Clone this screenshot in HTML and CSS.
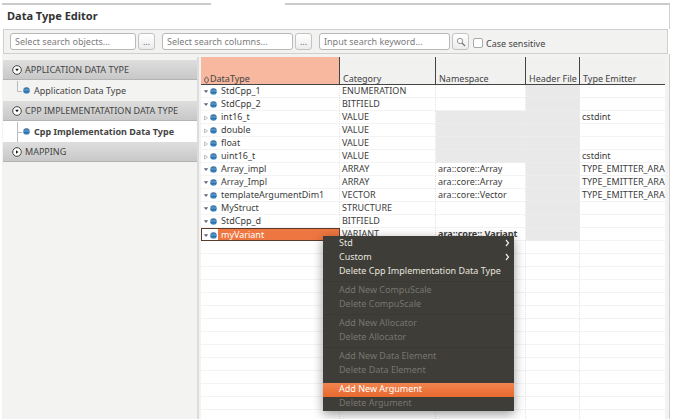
FILE: index.html
```html
<!DOCTYPE html>
<html lang="en">
<head>
<meta charset="utf-8">
<title>Data Type Editor</title>
<link rel="stylesheet" href="styles.css">
</head>
<body>
<svg class="defs" aria-hidden="true">
  <defs>
    <linearGradient id="ball" x1="0" y1="0" x2="0" y2="1">
      <stop offset="0" stop-color="#34628f"/><stop offset=".3" stop-color="#4b88ba"/><stop offset=".45" stop-color="#5f9fce"/><stop offset=".6" stop-color="#2a6ba5"/><stop offset="1" stop-color="#4a96cc"/>
    </linearGradient>
    <symbol id="dot" viewBox="0 0 7 7"><circle cx="3.5" cy="3.5" r="3.3" fill="url(#ball)"/></symbol>
    <symbol id="open" viewBox="0 0 6 6"><path d="M.8 1.2h4.4L3 4z" fill="#5d6a80"/></symbol>
    <symbol id="shut" viewBox="0 0 6 6"><path d="M1.5 1v4L4.5 3z" fill="#fff" stroke="#a8a8a8" stroke-width=".7"/></symbol>
    <symbol id="ring-down" viewBox="0 0 10 10"><circle cx="5" cy="5" r="4.3" fill="#fff" stroke="#444"/><path d="M3.2 3.8h3.6L5 6.2z" fill="#111"/></symbol>
    <symbol id="ring-right" viewBox="0 0 10 10"><circle cx="5" cy="5" r="4.3" fill="#fff" stroke="#444"/><path d="M4 3.2v3.6L6.4 5z" fill="#111"/></symbol>
  </defs>
</svg>
<div class="editor">
  <div class="tabline"><span></span><span></span></div>
  <h1>Data Type Editor</h1>
  <form class="toolbar">
    <input class="field" type="text" aria-label="Search objects" placeholder="Select search objects...">
    <button class="more" type="button">...</button>
    <input class="field wide" type="text" aria-label="Search columns" placeholder="Select search columns...">
    <button class="more" type="button">...</button>
    <input class="field wide" type="text" aria-label="Search keyword" placeholder="Input search keyword...">
    <button class="more find" type="button" aria-label="Search"><svg viewBox="0 0 10 10"><circle cx="4" cy="4" r="2.7" fill="#fafafa" stroke="#999"/><path d="M6 6l3 3" stroke="#777" stroke-width="1.3"/></svg></button>
    <span class="option"><input class="check" type="checkbox" id="case"><label for="case">Case sensitive</label></span>
  </form>
  <div class="main">
    <nav class="side">
      <button class="group" type="button"><svg><use href="#ring-down"/></svg>APPLICATION DATA TYPE</button>
      <a class="leaf" href="#app"><svg class="branch" viewBox="0 0 8 20"><path d="M2.5 0v10.5H7" fill="none" stroke="#bbb"/></svg><svg class="dot"><use href="#dot"/></svg>Application Data Type</a>
      <button class="group" type="button"><svg><use href="#ring-down"/></svg>CPP IMPLEMENTATATION DATA TYPE</button>
      <a class="leaf current" href="#cpp"><svg class="branch" viewBox="0 0 8 20"><path d="M2.5 0v20M2.5 10.5H7" fill="none" stroke="#bbb"/></svg><svg class="dot"><use href="#dot"/></svg>Cpp Implementation Data Type</a>
      <button class="group" type="button"><svg><use href="#ring-right"/></svg>MAPPING</button>
    </nav>
    <div class="content">
      <table>
        <colgroup><col class="c-type"><col class="c-cat"><col class="c-ns"><col class="c-head"><col></colgroup>
        <thead><tr><th class="sorted"><svg class="sort" viewBox="0 0 5 8"><path d="M2.5.8L4.3 3v2L2.5 7.2.7 5V3z" fill="none" stroke="#444" stroke-width=".8"/></svg>DataType</th><th>Category</th><th>Namespace</th><th>Header File</th><th>Type Emitter</th></tr></thead>
        <tbody>
          <tr><td><svg class="tw"><use href="#open"/></svg><svg class="dot"><use href="#dot"/></svg><span>StdCpp_1</span></td><td>ENUMERATION</td><td></td><td class="off"></td><td></td></tr>
          <tr><td><svg class="tw"><use href="#open"/></svg><svg class="dot"><use href="#dot"/></svg><span>StdCpp_2</span></td><td>BITFIELD</td><td></td><td class="off"></td><td></td></tr>
          <tr><td><svg class="tw"><use href="#shut"/></svg><svg class="dot"><use href="#dot"/></svg><span>int16_t</span></td><td>VALUE</td><td class="off"></td><td class="off"></td><td>cstdint</td></tr>
          <tr><td><svg class="tw"><use href="#shut"/></svg><svg class="dot"><use href="#dot"/></svg><span>double</span></td><td>VALUE</td><td class="off"></td><td class="off"></td><td></td></tr>
          <tr><td><svg class="tw"><use href="#shut"/></svg><svg class="dot"><use href="#dot"/></svg><span>float</span></td><td>VALUE</td><td class="off"></td><td class="off"></td><td></td></tr>
          <tr><td><svg class="tw"><use href="#shut"/></svg><svg class="dot"><use href="#dot"/></svg><span>uint16_t</span></td><td>VALUE</td><td class="off"></td><td class="off"></td><td>cstdint</td></tr>
          <tr><td><svg class="tw"><use href="#open"/></svg><svg class="dot"><use href="#dot"/></svg><span>Array_impl</span></td><td>ARRAY</td><td>ara::core::Array</td><td class="off"></td><td>TYPE_EMITTER_ARA</td></tr>
          <tr><td><svg class="tw"><use href="#open"/></svg><svg class="dot"><use href="#dot"/></svg><span>Array_Impl</span></td><td>ARRAY</td><td>ara::core::Array</td><td class="off"></td><td>TYPE_EMITTER_ARA</td></tr>
          <tr><td><svg class="tw"><use href="#open"/></svg><svg class="dot"><use href="#dot"/></svg><span>templateArgumentDim1</span></td><td>VECTOR</td><td>ara::core::Vector</td><td class="off"></td><td>TYPE_EMITTER_ARA</td></tr>
          <tr><td><svg class="tw"><use href="#open"/></svg><svg class="dot"><use href="#dot"/></svg><span>MyStruct</span></td><td>STRUCTURE</td><td></td><td class="off"></td><td></td></tr>
          <tr><td><svg class="tw"><use href="#open"/></svg><svg class="dot"><use href="#dot"/></svg><span>StdCpp_d</span></td><td>BITFIELD</td><td></td><td class="off"></td><td></td></tr>
          <tr class="selected"><td><svg class="tw"><use href="#open"/></svg><svg class="dot"><use href="#dot"/></svg><span>myVariant</span></td><td>VARIANT</td><td class="strong">ara::core:: Variant</td><td class="off"></td><td></td></tr>
          <tr><td></td><td></td><td></td><td></td><td></td></tr>
          <tr><td></td><td></td><td></td><td></td><td></td></tr>
          <tr><td></td><td></td><td></td><td></td><td></td></tr>
          <tr><td></td><td></td><td></td><td></td><td></td></tr>
          <tr><td></td><td></td><td></td><td></td><td></td></tr>
          <tr><td></td><td></td><td></td><td></td><td></td></tr>
          <tr><td></td><td></td><td></td><td></td><td></td></tr>
          <tr><td></td><td></td><td></td><td></td><td></td></tr>
          <tr><td></td><td></td><td></td><td></td><td></td></tr>
          <tr><td></td><td></td><td></td><td></td><td></td></tr>
          <tr><td></td><td></td><td></td><td></td><td></td></tr>
          <tr><td></td><td></td><td></td><td></td><td></td></tr>
          <tr><td></td><td></td><td></td><td></td><td></td></tr>
          <tr><td></td><td></td><td></td><td></td><td></td></tr>
        </tbody>
      </table>
      <div class="menu" role="menu">
        <button type="button" role="menuitem">Std<svg viewBox="0 0 5 8"><path d="M1 1l2.5 3L1 7" fill="none" stroke="#eee" stroke-width="1.2"/></svg></button>
        <button type="button" role="menuitem">Custom<svg viewBox="0 0 5 8"><path d="M1 1l2.5 3L1 7" fill="none" stroke="#eee" stroke-width="1.2"/></svg></button>
        <button type="button" role="menuitem">Delete Cpp Implementation Data Type</button>
        <hr>
        <button type="button" role="menuitem" disabled>Add New CompuScale</button>
        <button type="button" role="menuitem" disabled>Delete CompuScale</button>
        <hr>
        <button type="button" role="menuitem" disabled>Add New Allocator</button>
        <button type="button" role="menuitem" disabled>Delete Allocator</button>
        <hr>
        <button type="button" role="menuitem" disabled>Add New Data Element</button>
        <button type="button" role="menuitem" disabled>Delete Data Element</button>
        <hr>
        <button type="button" role="menuitem" class="active">Add New Argument</button>
        <button type="button" role="menuitem" disabled>Delete Argument</button>
      </div>
    </div>
  </div>
</div>
</body>
</html>
```
FILE: styles.css
```css
* { box-sizing: border-box; }
body {
  margin: 0;
  background: #fff;
  color: #444;
  font: 9px/13px "Noto Sans", "Open Sans", sans-serif;
}
button, input { font: inherit; color: inherit; margin: 0; }
svg { flex: none; }
.defs { position: absolute; width: 0; height: 0; }
.editor {
  display: flex;
  flex-direction: column;
  height: 100vh;
  padding: 3px 3px 1px 2px;
  overflow: hidden;
}
.tabline { display: flex; gap: 74px; height: 2px; }
.tabline span { background: #cbcbcb; width: 209px; }
.tabline span + span { flex: 1; width: auto; }
h1 {
  margin: 0;
  padding: 3px 5px 6px;
  border-right: 1px solid #d0d0d0;
  font-size: 11px;
  line-height: 15px;
  color: #333;
}
.toolbar {
  display: flex;
  align-items: center;
  height: 25px;
  margin: 0 2px 0 1px;
  padding: 0 6px;
  border: 1px solid #cfcfcf;
  background: #f2f2f1;
}
.field {
  width: 126px;
  height: 17px;
  padding: 0 4px;
  border: 1px solid #b9b9b9;
  border-radius: 3px;
  background: #fff;
}
.field.wide { width: 131px; }
.field::placeholder { color: #7c7c7c; opacity: 1; }
.more {
  width: 17px;
  height: 17px;
  margin: 0 7px 0 2px;
  padding: 0;
  border: 1px solid #c3c3c3;
  border-radius: 3px;
  background: linear-gradient(#fff, #ececec);
  color: #666;
  line-height: 13px;
}
.find { display: flex; align-items: center; justify-content: center; margin-right: 4px; }
.find svg { width: 10px; height: 10px; }
.option { display: flex; align-items: center; padding-top: 3px; }
.check {
  appearance: none;
  width: 10px;
  height: 10px;
  margin-right: 3px;
  border: 1px solid #aaa;
  border-radius: 2px;
  background: #fff;
}
.main {
  display: flex;
  flex: 1;
  min-height: 0;
  padding-top: 3px;
  padding-right: 4px;
  border-right: 1px solid #d0d0d0;
  background: #f3f3f2;
}
.side {
  width: 197px;
  padding: 3px 0 0 1px;
  border-right: 2px solid #dcdcdc;
}
.group, .leaf {
  display: flex;
  align-items: center;
  width: 100%;
  color: #444;
  text-align: left;
  text-decoration: none;
}
.group {
  height: 20px;
  gap: 3px;
  padding: 0 9px;
  border: 0;
  border-bottom: 1px solid #b4b4b4;
  background: linear-gradient(#dedede, #c8c8c8);
}
.group svg { width: 10px; height: 10px; }
.leaf { height: 21px; padding-left: 12px; }
.leaf.current { background: #fff; font-weight: bold; }
.branch { width: 8px; height: 20px; }
.dot { width: 7px; height: 7px; }
.leaf .dot { margin-right: 4px; }
.content {
  position: relative;
  flex: 1;
  min-width: 0;
  margin-left: 2px;
  background: #fff;
  overflow: hidden;
}
table { width: 100%; table-layout: fixed; border-collapse: separate; border-spacing: 0; }
.c-type { width: 139px; }
.c-cat { width: 96px; }
.c-ns { width: 90px; }
.c-head { width: 54px; }
th {
  height: 28px;
  padding: 0 0 0 3px;
  border-right: 1px solid #444;
  border-bottom: 1px solid #444;
  background: #f1f1f0;
  font-weight: normal;
  line-height: 11px;
  text-align: left;
  vertical-align: bottom;
  white-space: nowrap;
}
th:last-child, td:last-child { border-right: 0; }
.sorted { background: #f7b89f; }
.sort { width: 5px; height: 8px; margin-right: 1px; vertical-align: bottom; }
td {
  height: 13px;
  padding: 0 0 0 2px;
  border-right: 1px dotted #e4e4e4;
  border-bottom: 1px solid #f3f3f3;
  line-height: 12px;
  color: #3c3c3c;
  white-space: nowrap;
  overflow: hidden;
}
td svg { display: inline-block; vertical-align: middle; }
td span { display: inline-block; padding-left: 4px; line-height: 12px; vertical-align: top; }
.tw { width: 6px; height: 6px; margin-right: 1px; }
.off { background: #e9e9e9; border-color: #ececec; }
.selected td:first-child {
  border: 1px solid #5c3a2c;
  padding-left: 1px;
  background: linear-gradient(90deg, #fff 16px, #ee7640 16px);
  line-height: 11px;
}
.selected span { color: #fff; line-height: 11px; }
.strong { font-weight: bold; }
.menu {
  position: absolute;
  left: 122px;
  top: 179px;
  width: 191px;
  padding-top: 1px;
  background: #3e3d38;
  box-shadow: 0 3px 10px rgba(0, 0, 0, .4);
}
.menu button {
  display: flex;
  align-items: center;
  justify-content: space-between;
  width: 100%;
  height: 14px;
  padding: 0 4px 2px 16px;
  border: 0;
  background: none;
  color: #e6e4de;
  line-height: 12px;
  white-space: nowrap;
}
.menu button:disabled { color: #77766f; }
.menu button.active { background: linear-gradient(#f2844f, #e9692f); color: #fff; }
.menu svg { width: 5px; height: 8px; }
.menu hr { height: 1px; margin: 2px 0; border: 0; background: #3a3935; }
```
